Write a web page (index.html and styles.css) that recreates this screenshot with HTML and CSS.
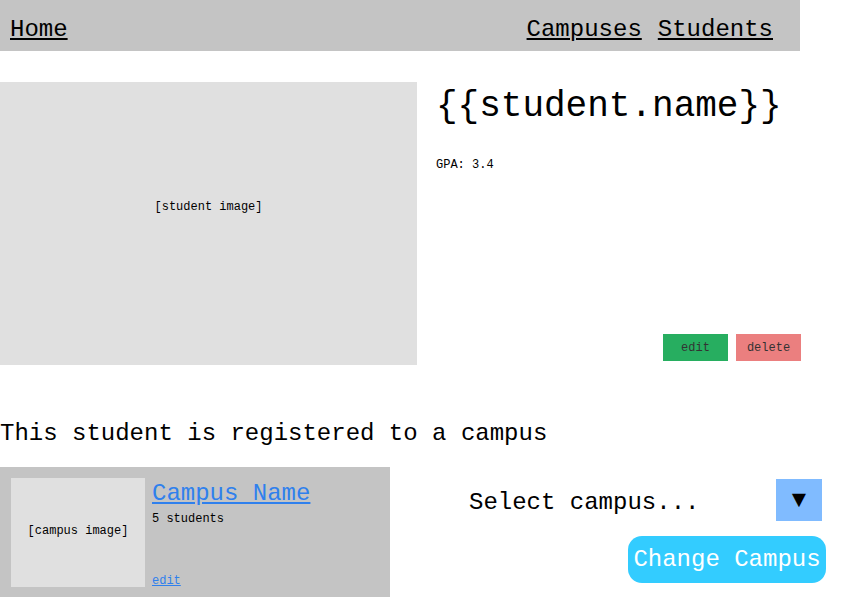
FILE: index.html
```html
<!DOCTYPE html>
<html>
<head>
<meta charset="utf-8">
<link rel="stylesheet" href="styles.css">
</head>
<body>
<div class="page">
  <nav class="nav">
    <a class="nav-link" href="#">Home</a>
    <div class="nav-right">
      <a class="nav-link" href="#">Campuses</a>
      <a class="nav-link" href="#">Students</a>
    </div>
  </nav>

  <section class="student">
    <div class="student-image">[student image]</div>
    <div class="student-info">
      <h1 class="student-name">{{student.name}}</h1>
      <p class="gpa">GPA: 3.4</p>
      <div class="actions">
        <button class="btn btn-edit">edit</button>
        <button class="btn btn-delete">delete</button>
      </div>
    </div>
  </section>

  <h2 class="registered">This student is registered to a campus</h2>

  <section class="campus-row">
    <div class="campus-card">
      <div class="campus-image">[campus image]</div>
      <div class="campus-info">
        <a class="campus-name" href="#">Campus Name</a>
        <p class="campus-count">5 students</p>
        <a class="campus-edit" href="#">edit</a>
      </div>
    </div>
    <div class="change">
      <div class="select">
        <span class="select-text">Select campus...</span>
        <span class="select-arrow">▼</span>
      </div>
      <button class="change-btn">Change Campus</button>
    </div>
  </section>
</div>
</body>
</html>
```

FILE: styles.css
```css
* { box-sizing: border-box; }
body {
  margin: 0;
  font-family: "Liberation Mono", "DejaVu Sans Mono", monospace;
  color: #000;
  background: #fff;
}
.page { width: 800px; }

.nav {
  height: 51px;
  background: #c4c4c4;
  display: flex;
  justify-content: space-between;
  align-items: center;
  padding: 8px 27px 0 10px;
}
.nav-right { display: flex; gap: 16px; }
.nav-link {
  font-size: 24px;
  color: #000;
  text-decoration: underline;
}

.student {
  margin-top: 31px;
  display: flex;
}
.student-image {
  width: 417px;
  height: 283px;
  background: #e0e0e0;
  display: flex;
  align-items: center;
  justify-content: center;
  font-size: 12px;
  padding-bottom: 33px;
}
.student-info {
  flex: 1;
  display: flex;
  flex-direction: column;
  padding: 0 0 4px 19px;
}
.student-name {
  margin: 0;
  font-size: 36px;
  font-weight: normal;
  line-height: 48px;
  padding-top: 1px;
}
.gpa {
  margin: 27px 0 0;
  font-size: 12px;
}
.actions {
  margin-top: auto;
  display: flex;
  justify-content: flex-end;
  gap: 8px;
  margin-right: -1px;
}
.btn {
  width: 65px;
  height: 27px;
  border: none;
  font-family: inherit;
  font-size: 12px;
  color: #333;
  padding: 0;
}
.btn-edit { background: #27ae60; }
.btn-delete { background: #eb7f7f; }

.registered {
  margin: 52px 0 0;
  font-size: 24px;
  font-weight: normal;
  line-height: 34px;
}

.campus-row {
  margin-top: 16px;
  display: flex;
}
.campus-card {
  width: 390px;
  height: 130px;
  flex-shrink: 0;
  background: #c4c4c4;
  padding: 11px;
  display: flex;
  gap: 7px;
}
.campus-image {
  width: 134px;
  height: 109px;
  background: #e0e0e0;
  display: flex;
  align-items: center;
  justify-content: center;
  font-size: 12px;
  padding-bottom: 4px;
}
.campus-info {
  display: flex;
  flex-direction: column;
  align-items: flex-start;
}
.campus-name {
  font-size: 24px;
  color: #2f80ed;
  line-height: 28px;
  margin-top: 2px;
}
.campus-count {
  margin: 4px 0 0;
  font-size: 12px;
}
.campus-edit {
  margin-top: auto;
  font-size: 12px;
  color: #2f80ed;
  line-height: 14px;
  margin-bottom: -2px;
}

.change {
  width: 436px;
  flex-shrink: 0;
  display: flex;
  flex-direction: column;
  align-items: flex-end;
  padding-top: 12px;
}
.select {
  display: flex;
  align-items: center;
  justify-content: space-between;
  width: 353px;
  margin-right: 4px;
}
.select-text { font-size: 24px; padding-top: 4px; }
.select-arrow {
  width: 46px;
  height: 42px;
  background: #80bbff;
  display: flex;
  align-items: center;
  justify-content: center;
  font-size: 24px;
}
.change-btn {
  margin-top: 15px;
  width: 198px;
  height: 47px;
  border: none;
  border-radius: 14px;
  background: #33ccff;
  color: #fff;
  font-family: inherit;
  font-size: 24px;
  padding: 0;
}
```
